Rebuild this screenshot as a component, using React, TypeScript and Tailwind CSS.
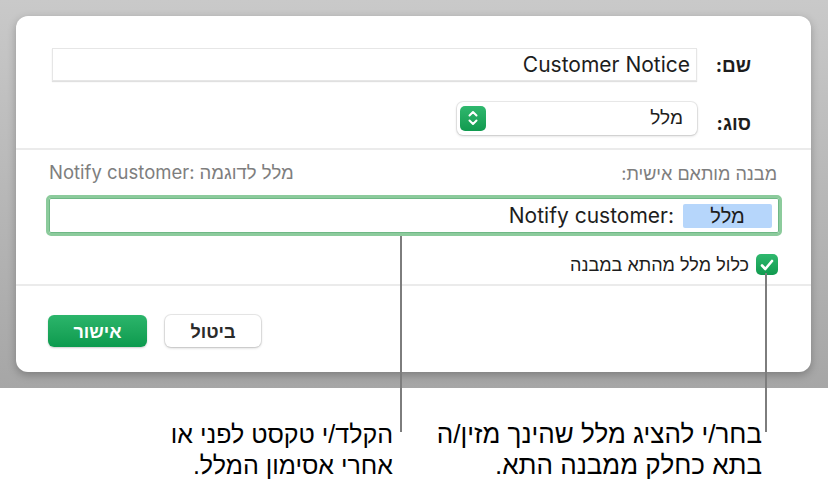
import React from "react";

const FONT = { fontFamily: 'Inter, "Liberation Sans", sans-serif' };

function Stepper() {
  return (
    <span className="flex h-[25px] w-[26px] items-center justify-center rounded-[5px] bg-gradient-to-b from-[#2fb86e] to-[#0f9a4f]">
      <svg width="12" height="18" viewBox="0 0 12 18" fill="none" stroke="white" strokeWidth="2" strokeLinecap="round" strokeLinejoin="round">
        <path d="M2.5 6.5 6 3l3.5 3.5" />
        <path d="M2.5 11.5 6 15l3.5-3.5" />
      </svg>
    </span>
  );
}

function CheckBox() {
  return (
    <span className="flex h-[21px] w-[22px] items-center justify-center rounded-[5px] bg-gradient-to-b from-[#2fb86e] to-[#0f9a4f]">
      <svg width="14" height="12" viewBox="0 0 14 12" fill="none" stroke="white" strokeWidth="2.6" strokeLinecap="round" strokeLinejoin="round">
        <path d="M2 6.5 5.3 10 12 2" />
      </svg>
    </span>
  );
}

export default function App() {
  return (
    <div className="relative h-[489px] w-[828px] overflow-hidden bg-white text-[#1d1d1d]" style={FONT}>
      {/* grey backdrop with the sheet */}
      <div className="h-[388px] bg-gradient-to-b from-[#c9c9c9] to-[#a6a6a6] pl-[16px] pr-[17px] pt-[16px]">
        <div dir="rtl" className="flex h-[356px] flex-col rounded-[12px] bg-white shadow-[0_3px_8px_rgba(0,0,0,0.25)]">
          {/* name / type */}
          <div className="flex h-[132px] flex-col gap-[17px] pl-[35px] pr-[60px] pt-[32px]">
            <div className="flex items-center">
              <span className="w-[54px] pt-[4px] text-[19px] font-bold">שם:</span>
              <div className="flex h-[33px] w-[645px] items-center border border-[#e6e6e6] bg-white pr-[6px] text-[21px] shadow-[0_1px_1px_rgba(0,0,0,0.12)]">
                Customer Notice
              </div>
            </div>
            <div className="flex items-center">
              <span className="w-[54px] pt-[12px] text-[19px] font-bold">סוג:</span>
              <div className="flex h-[33px] w-[240px] items-center justify-between rounded-[6px] bg-white pl-[3px] pr-[14px] text-[19px] shadow-[0_0_0_1px_rgba(0,0,0,0.07),0_1px_3px_rgba(0,0,0,0.18)]">
                <span>מלל</span>
                <Stepper />
              </div>
            </div>
          </div>
          <div className="h-[2px] bg-[#ebebeb]" />

          {/* custom format */}
          <div className="flex h-[134px] flex-col pl-[30px] pr-[29px] pt-[12px]">
            <div className="flex h-[22px] items-center justify-between pl-[3px] pr-[5px] text-[18px] text-[#7e7e7e]">
              <span>מבנה מותאם אישית:</span>
              <span className="flex gap-[5px] text-[18.5px]">
                <span>מלל לדוגמה</span>
                <span dir="ltr">Notify customer:</span>
              </span>
            </div>
            <div className="mt-[11px] flex h-[41px] items-center gap-[9px] rounded-[5px] border-[3px] border-[#8ccb9c] bg-white pr-[7px] shadow-[inset_0_0_0_1px_#6fb886]">
              <span className="flex h-[24px] w-[89px] items-center justify-center rounded-[2px] bg-[#b6d6fb] text-[20px]">מלל</span>
              <span dir="ltr" className="text-[21px]">Notify customer:</span>
            </div>
            <div className="mt-[15px] flex items-center gap-[7px] pr-[4px]">
              <CheckBox />
              <span className="text-[18px]">כלול מלל מהתא במבנה</span>
            </div>
          </div>
          <div className="h-[2px] bg-[#ebebeb]" />

          {/* buttons */}
          <div className="flex flex-1 items-start justify-end gap-[18px] pl-[32px] pt-[29px]">
            <button className="flex h-[32px] w-[96px] items-center justify-center rounded-[6px] bg-white text-[18px] font-bold text-[#2a2a2a] shadow-[0_0_0_1px_rgba(0,0,0,0.08),0_1px_3px_rgba(0,0,0,0.2)]">
              ביטול
            </button>
            <button className="flex h-[32px] w-[99px] items-center justify-center rounded-[6px] bg-gradient-to-b from-[#2bb56b] to-[#0b9a4e] text-[18px] font-bold text-white shadow-[0_1px_2px_rgba(0,0,0,0.2)]">
              אישור
            </button>
          </div>
        </div>
      </div>

      {/* callouts */}
      <div dir="rtl" className="flex pr-[66px] pt-[31px] text-[26px] leading-[31px] text-black" style={{ fontFamily: '"Liberation Sans", sans-serif' }}>
        <p className="w-[369px] whitespace-nowrap">
          בחר/י להציג מלל שהינך מזין/ה
          <br />
          בתא כחלק ממבנה התא.
        </p>
        <p className="whitespace-nowrap text-[25px]">
          הקלד/י טקסט לפני או
          <br />
          אחרי אסימון המלל.
        </p>
      </div>

      <div className="absolute left-[400px] top-[236px] h-[196px] w-[2px] bg-[#7d7d7d]" />
      <div className="absolute left-[765px] top-[273px] h-[159px] w-[2px] bg-[#7d7d7d]" />
    </div>
  );
}
